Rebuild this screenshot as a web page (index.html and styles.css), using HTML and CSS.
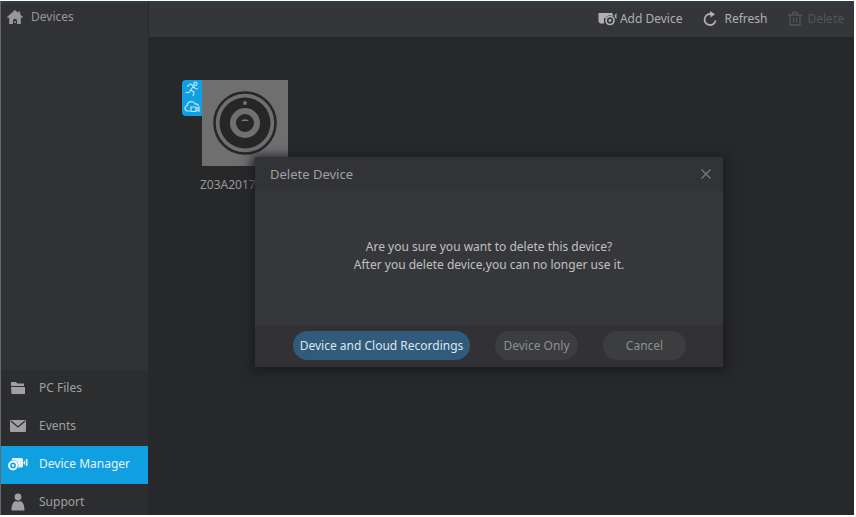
FILE: index.html
```html
<!DOCTYPE html>
<html lang="en">
<head>
<meta charset="utf-8">
<title>Device Manager</title>
<link rel="stylesheet" href="styles.css">
</head>
<body>
<div class="app">
  <aside class="sidebar">
    <a class="home" href="#">
      <svg width="16" height="14" viewBox="0 0 16 14"><path fill="currentColor" d="M8 0 0 7l1 1.200 1.200-.9V14h3.800v-3.200a2 2 0 0 1 4 0V14h3.800V7.300l1.200.9L16 7l-2.800-2.500V1.500h-2v1.200z"/><circle cx="8" cy="12" r="1" fill="currentColor"/></svg>
      <span>Devices</span>
    </a>
    <nav class="menu">
      <a class="item" href="#">
        <svg width="16" height="14" viewBox="0 0 16 14"><path fill="currentColor" d="M1 1h5l1.500 1.500H14V5H1zM1 6h14v7H1.500z"/></svg>
        <span>PC Files</span>
      </a>
      <a class="item" href="#">
        <svg width="16" height="14" viewBox="0 0 16 14"><rect y="1" width="16" height="12" rx="1" fill="currentColor"/><path d="m1 2 7 6 7-6" fill="none" stroke="#2c2d2f" stroke-width="1.200"/></svg>
        <span>Events</span>
      </a>
      <a class="item active" href="#">
        <svg class="wide" width="20" height="14" viewBox="0 0 20 14"><path fill="currentColor" d="M4 1h9.500q1.500 0 1.500 1.500V9q0 1.500-1.500 1.500H4zM15.500 5 17 3.500v4.500l-1.500-1.500zM17.800 2h1.700v7h-1.700z"/><circle cx="5" cy="8.500" r="5.400" fill="#109fe0"/><circle cx="5" cy="8.500" r="3.900" fill="none" stroke="#fff" stroke-width="2"/><circle cx="5" cy="8.500" r="1.300" fill="#fff"/></svg>
        <span>Device Manager</span>
      </a>
      <a class="item" href="#">
        <svg width="16" height="18" viewBox="0 0 16 18"><circle cx="8" cy="4" r="3.400" fill="currentColor"/><path fill="currentColor" d="M1.500 17.500c0-5 1.500-8.500 4-9.500Q8 9.500 10.500 8c2.500 1 4 4.500 4 9.500z"/></svg>
        <span>Support</span>
      </a>
    </nav>
  </aside>

  <main class="main">
    <header class="toolbar">
      <button class="tool add" type="button">
        <svg width="20" height="16" viewBox="0 0 20 16"><path fill="currentColor" d="M.5 2h13.500l1 1.500V7H6v5.500H2L.5 10.500zM16.500 4.500 18.500 2v6L17 6.500z"/><circle cx="12" cy="9.500" r="5.300" fill="#353639"/><circle cx="12" cy="9.500" r="4" fill="none" stroke="currentColor" stroke-width="1.700"/><circle cx="12" cy="9.500" r="1.400" fill="currentColor"/></svg>
        <span>Add Device</span>
      </button>
      <button class="tool" type="button">
        <svg width="16" height="16" viewBox="0 0 16 16"><path d="M9 3H8a5.500 5.500 0 1 0 5.500 6.500" fill="none" stroke="currentColor" stroke-width="1.800"/><path fill="currentColor" d="m8 0 5 3.200L8.500 6.500z"/></svg>
        <span>Refresh</span>
      </button>
      <button class="tool" type="button" disabled>
        <svg width="14" height="16" viewBox="0 0 14 16"><path d="M0 4h14M4.500 4V1.500h5V4M2 4v10h10V4M5.500 6.500v5M8.500 6.500v5" fill="none" stroke="currentColor" stroke-width="1.300"/></svg>
        <span>Delete</span>
      </button>
    </header>

    <section class="devices">
      <figure class="device">
        <div class="badges">
          <svg width="16" height="16" viewBox="0 0 16 16"><circle cx="11.500" cy="2.700" r="1.600"/><path d="M3 5.500 6.500 3l3 2-2.800 4 3.300 2-1 4M9.500 5l1.500 2.500 3 .5M6.700 9 5 11.500H1.500"/></svg>
          <svg width="16" height="16" viewBox="0 0 16 16"><path d="M6 12H3.500a2.800 2.800 0 0 1-.3-5.500 4.200 4.200 0 0 1 8-1.500 3 3 0 0 1 3.300 2.500"/><path d="M7 8h5v4.500H7zM12.500 9.800l2.500-1.300v3.500l-2.500-1"/></svg>
        </div>
        <svg class="thumb" width="86" height="86" viewBox="0 0 86 86"><rect width="86" height="86" fill="#6f6f70"/><circle cx="43" cy="43" r="30.500" fill="none" stroke="#252628" stroke-width="2.600"/><circle cx="43" cy="43" r="25.500" fill="#252628"/><circle cx="43" cy="43" r="12" fill="#252628" stroke="#707071" stroke-width="6"/><circle cx="43" cy="23" r="1.900" fill="#777"/><path d="M39 41a4.500 3 0 0 1 8 0z" fill="#777"/></svg>
        <figcaption>Z03A2017</figcaption>
      </figure>
    </section>

    <section class="dialog" role="dialog" aria-labelledby="dialog-title">
      <header class="dialog-head">
        <h1 id="dialog-title">Delete Device</h1>
        <button class="close" type="button" aria-label="Close">
          <svg width="12" height="12" viewBox="0 0 12 12"><path d="m1.500 1.500 9 9M10.500 1.500l-9 9" stroke="currentColor" stroke-width="1.400"/></svg>
        </button>
      </header>
      <p class="message">Are you sure you want to delete this device?<br>After you delete device,you can no longer use it.</p>
      <footer class="actions">
        <button class="pill primary" type="button">Device and Cloud Recordings</button>
        <button class="pill" type="button">Device Only</button>
        <button class="pill" type="button">Cancel</button>
      </footer>
    </section>
  </main>
</div>
</body>
</html>
```
FILE: styles.css
```css
* { box-sizing: border-box; }

body {
  margin: 0;
  padding: 1px 2px 2px 0;
  height: 100vh;
  background: #fff;
  font: 12px/18px "Noto Sans", "Open Sans", sans-serif;
  color: #a0a0a2;
}

button {
  margin: 0;
  padding: 0;
  border: 0;
  background: none;
  font: inherit;
  color: inherit;
}

a { color: inherit; text-decoration: none; }
svg { display: block; flex: none; }

.app {
  display: flex;
  height: 100%;
  overflow: hidden;
  background: #27282a;
  border-left: 1px solid #66686a;
}

.sidebar {
  display: flex;
  flex-direction: column;
  justify-content: space-between;
  flex: 0 0 148px;
  background: linear-gradient(#2f3d43, #313235 5px);
  border-right: 1px solid #28292b;
}

.home {
  display: flex;
  align-items: center;
  gap: 8px;
  padding: 7px 6px;
  color: #98989a;
}

.menu { background: #2c2d2f; }

.item {
  display: flex;
  align-items: center;
  gap: 13px;
  height: 38px;
  padding: 0 0 2px 9px;
}

.item:last-child { height: 31px; padding-top: 6px; }
.active { background: #109fe0; color: #e4f5fd; }
.item .wide { margin: 0 -2px 0 -2px; }

.main {
  position: relative;
  flex: 1;
  min-width: 0;
}

.toolbar {
  display: flex;
  justify-content: flex-end;
  gap: 20px;
  height: 36px;
  padding: 0 10px 0 0;
  background: linear-gradient(#2f3d43, #353639 5px);
}

.tool {
  display: flex;
  align-items: center;
  gap: 6px;
  color: #b0b0b2;
}

.add { gap: 2px; }
.tool:disabled { color: #535457; }

.devices { padding: 43px 33px; }

.device {
  display: grid;
  grid-template-columns: 20px 86px;
  justify-content: start;
  margin: 0;
}

.badges {
  align-self: start;
  display: grid;
  gap: 2px;
  padding: 1px 2px;
  background: #109fe0;
  border-radius: 4px 0 0 4px;
}

.badges svg { fill: none; stroke: #b9e6fa; stroke-width: 1.2; }

.device figcaption {
  grid-column: 1 / -1;
  padding: 10px 0 0 18px;
  color: #98989a;
}

.dialog {
  position: absolute;
  top: 156px;
  left: 106px;
  width: 468px;
  background: #36373a;
  box-shadow: 0 2px 10px 3px #1b1c1f;
}

.dialog-head {
  display: flex;
  align-items: center;
  justify-content: space-between;
  height: 34px;
  padding: 0 11px 0 15px;
  background: #323336;
}

.dialog-head h1 { margin: 0; font-size: 13px; font-weight: 400; }
.close { color: #77787a; }

.message {
  margin: 0;
  padding: 47px 0 51px;
  text-align: center;
  color: #c0c0c2;
}

.actions {
  display: flex;
  gap: 25px;
  padding: 6px 38px 7px;
  background: #323236;
}

.pill {
  flex: 0 0 83px;
  height: 29px;
  border-radius: 15px;
  background: #3c3d3f;
  color: #8e8f91;
  white-space: nowrap;
}

.primary {
  flex-basis: 177px;
  background: #315a7b;
  color: #dbe7ef;
}
```
